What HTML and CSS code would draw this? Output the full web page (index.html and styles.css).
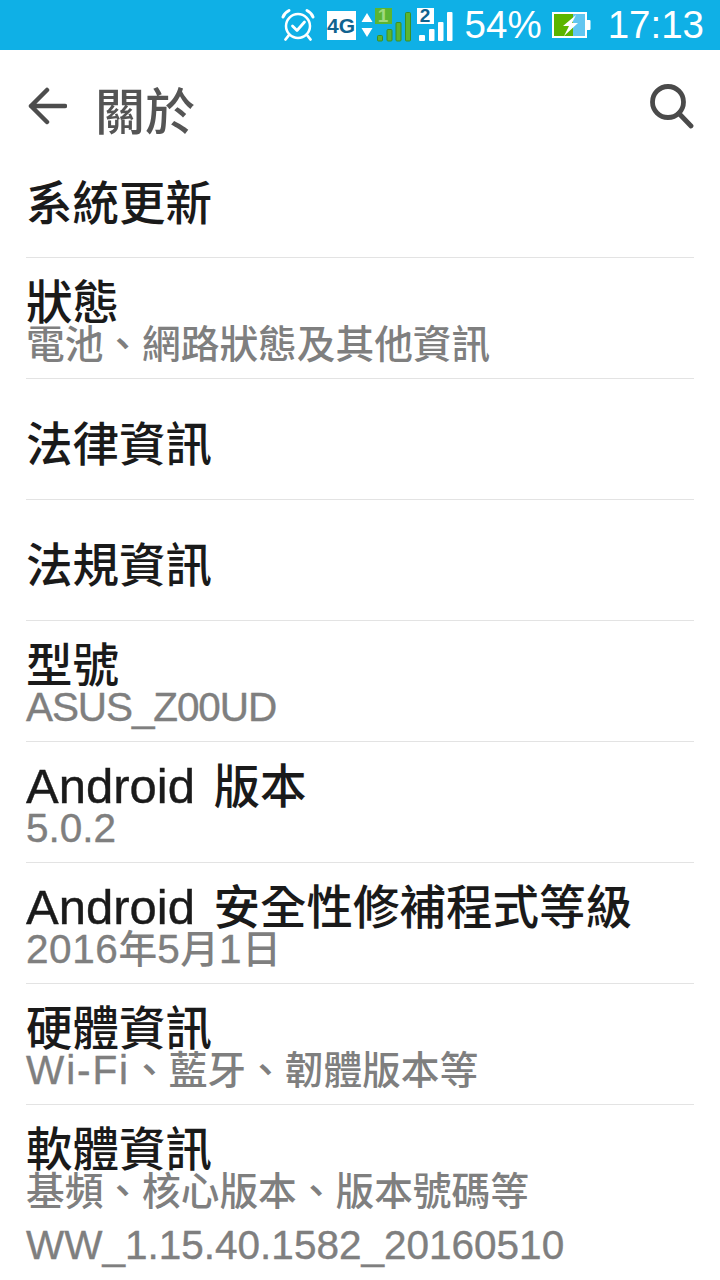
FILE: index.html
```html
<!DOCTYPE html>
<html lang="zh-Hant">
<head>
  <meta charset="UTF-8" />
  <title>關於</title>
  <link rel="stylesheet" href="styles.css">
</head>
<body>
  <div class="statusbar">
    <svg class="ic-alarm" width="34" height="34" viewBox="0 0 34 34" fill="none" stroke="#fff" stroke-linecap="round" stroke-linejoin="round">
      <circle cx="17" cy="18" r="12" stroke-width="2.5"/>
      <path d="M11.5 18l4.500 4.500 7.500-8.500" stroke-width="2.800"/>
      <path d="M2 9c1-3 3-5 6-6.500M32 9c-1-3-3-5-6-6.500" stroke-width="3"/>
      <path d="M8 27l-3.500 4.500M26 27l3.500 4.500" stroke-width="2.800"/>
    </svg>
    <div class="net-box">4G</div>
    <svg class="ic-arrows" width="12" height="28" viewBox="0 0 12 28" fill="#fff">
      <path d="M6 2l5.500 9H.5zM6 26l5.500-9H.5z"/>
    </svg>
    <div class="sim sim-green">
      <span class="sim-num">1</span>
      <svg width="36" height="34" viewBox="0 0 36 34" fill="#5cb531" stroke="#3d8f22">
        <rect x="2.500" y="27.500" width="5" height="5.500" rx="1"/>
        <rect x="12" y="21.500" width="5" height="11.500" rx="1"/>
        <rect x="21" y="14.500" width="5" height="18.500" rx="1"/>
        <rect x="30.500" y="4.500" width="5" height="28.500" rx="1"/>
      </svg>
    </div>
    <div class="sim sim-white">
      <span class="sim-num">2</span>
      <svg width="36" height="34" viewBox="0 0 36 34" fill="#fff">
        <rect x="2" y="27" width="6" height="6" rx="1"/>
        <rect x="12" y="21" width="5.500" height="12" rx="1"/>
        <rect x="21" y="14" width="5.500" height="19" rx="1"/>
        <rect x="30" y="4" width="5.500" height="29" rx="1"/>
      </svg>
    </div>
    <span class="pct">54%</span>
    <svg class="ic-batt" width="39" height="26" viewBox="0 0 39 26">
      <rect x="1" y="1" width="33" height="24" fill="#62c6f0" stroke="#fff" stroke-width="2"/>
      <rect x="2" y="2" width="19" height="22" fill="#5cb500"/>
      <rect x="34" y="8" width="4.500" height="10" rx="1" fill="#fff"/>
      <path d="M24 3L11 14h6l-5 10 14-13h-6l4-8z" fill="#fff"/>
    </svg>
    <span class="clock">17:13</span>
  </div>

  <header class="appbar">
    <svg class="ic-back" width="40" height="38" viewBox="0 0 40 38" fill="none" stroke="#4d4d4d" stroke-width="4.500" stroke-linecap="round" stroke-linejoin="round">
      <path d="M20 3L4 19l16 16M4 19h34"/>
    </svg>
    <h1 class="title">關於</h1>
    <svg class="ic-search" width="46" height="46" viewBox="0 0 46 46" fill="none" stroke="#4a4a4a" stroke-width="4.800" stroke-linecap="round">
      <circle cx="20" cy="19" r="15.500"/>
      <path d="M31 30.500L43 43"/>
    </svg>
  </header>

  <div class="list">
    <div class="row row-first"><div class="row-title">系統更新</div></div>
    <div class="row">
      <div class="row-title">狀態</div>
      <div class="row-sub">電池、網路狀態及其他資訊</div>
    </div>
    <div class="row"><div class="row-title">法律資訊</div></div>
    <div class="row"><div class="row-title">法規資訊</div></div>
    <div class="row">
      <div class="row-title">型號</div>
      <div class="row-sub"><span class="lat caps">ASUS_Z00UD</span></div>
    </div>
    <div class="row">
      <div class="row-title"><span class="lat">Android </span>版本</div>
      <div class="row-sub"><span class="lat">5.0.2</span></div>
    </div>
    <div class="row">
      <div class="row-title"><span class="lat">Android </span>安全性修補程式等級</div>
      <div class="row-sub"><span class="lat digits">2016</span>年<span class="lat digits">5</span>月<span class="lat digits">1</span>日</div>
    </div>
    <div class="row">
      <div class="row-title">硬體資訊</div>
      <div class="row-sub"><span class="lat wifi">Wi-Fi</span>、藍牙、韌體版本等</div>
    </div>
    <div class="row row-last">
      <div class="row-title">軟體資訊</div>
      <div class="row-sub">基頻、核心版本、版本號碼等</div>
      <div class="row-sub row-extra"><span class="lat">WW_1.15.40.1582_20160510</span></div>
    </div>
  </div>
</body>
</html>
```

FILE: styles.css
```css
html, body {
  margin: 0;
  height: 1280px;
  overflow: hidden;
}

body {
  font-family: "Liberation Sans", "Noto Sans CJK TC", sans-serif;
  background-color: #fff;
  color: #1a1a1a;
}

.statusbar {
  height: 50px;
  background-color: #0fb0e6;
  color: #fff;
  display: flex;
  align-items: center;
  justify-content: flex-end;
  padding-right: 16px;
}

.ic-alarm {
  margin-right: 12px;
}

.net-box {
  width: 29px;
  height: 29px;
  background-color: #fff;
  color: #10638f;
  font-size: 21px;
  font-weight: 700;
  line-height: 29px;
  text-align: center;
}

.ic-arrows {
  margin: 0 2px 0 5px;
}

.sim {
  position: relative;
  width: 36px;
  height: 34px;
}

.sim svg {
  display: block;
}

.sim-num {
  position: absolute;
  left: 0;
  top: 0;
  width: 17px;
  height: 16px;
  font-size: 19px;
  font-weight: 700;
  line-height: 16px;
  text-align: center;
}

.sim-green .sim-num {
  background-color: #5cb531;
  color: #9fd97e;
}

.sim-white {
  margin-left: 6px;
}

.sim-white .sim-num {
  background-color: #fff;
  color: #10638f;
}

.pct {
  font-size: 38.500px;
  margin-left: 12px;
}

.ic-batt {
  margin-left: 10px;
}

.clock {
  font-size: 38.500px;
  margin-left: 17px;
}

.appbar {
  height: 111px;
  display: flex;
  align-items: center;
  padding: 0 26px 0 27px;
}

.ic-back {
  margin-top: 1px;
}

.title {
  margin: 14px 0 0 28px;
  flex: 1;
  font-size: 50px;
  font-weight: 500;
  color: #555;
  line-height: 1;
}

.row {
  box-sizing: border-box;
  height: 121px;
  margin: 0 26px;
  padding-top: 12px;
  border-bottom: 1px solid #e3e3e3;
  display: flex;
  flex-direction: column;
  justify-content: center;
}

.row-first {
  height: 97px;
  padding: 0 0 10px;
}

.row-last {
  height: auto;
  padding-top: 24px;
  border-bottom: none;
}

.row-title {
  font-size: 46.500px;
  font-weight: 500;
  line-height: 42px;
  white-space: nowrap;
}

.row-title .lat {
  font-size: 49px;
  font-weight: 400;
  line-height: 0;
  margin-right: 5px;
  -webkit-text-stroke: 0.4px #1a1a1a;
}

.row-sub {
  font-size: 38.700px;
  font-weight: 500;
  line-height: 42px;
  color: #7f7f7f;
  white-space: nowrap;
}

.row-sub .lat {
  font-size: 40.500px;
  font-weight: 400;
  line-height: 0;
  -webkit-text-stroke: 0.4px #7f7f7f;
}

.row-sub .caps {
  letter-spacing: -1.100px;
}

.row-sub .digits {
  letter-spacing: 0.600px;
}

.row-sub .wifi {
  letter-spacing: 1.900px;
}

.row-extra {
  margin-top: 12px;
}
```
